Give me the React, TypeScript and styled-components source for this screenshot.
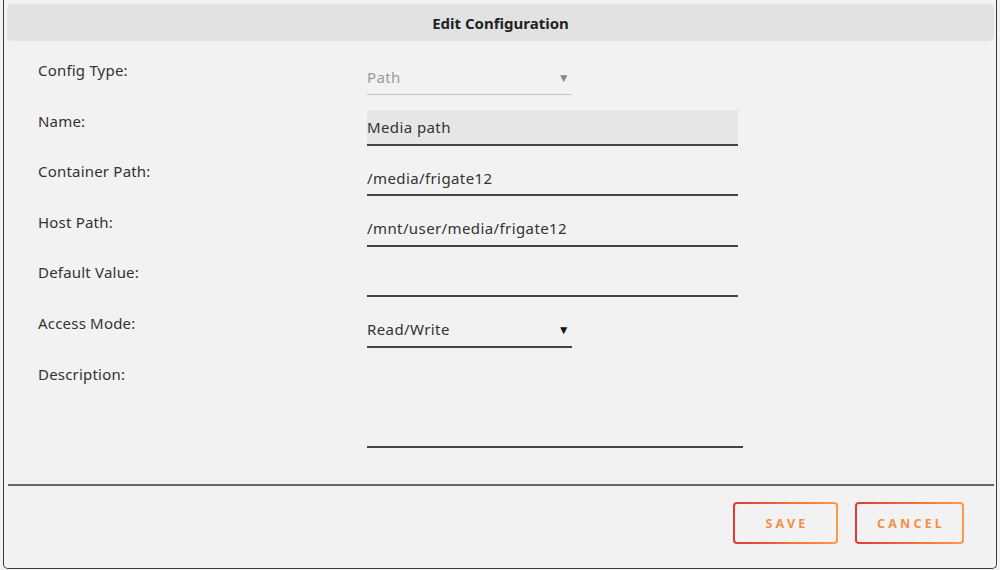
import React from "react";
import styled, { createGlobalStyle } from "styled-components";

const Global = createGlobalStyle`
  html, body { margin: 0; padding: 0; background: #f2f2f2; }
  body { font-family: "Noto Sans", "Open Sans", sans-serif; color: #333; }
`;

const Dialog = styled.div`
  box-sizing: border-box;
  margin: 0 3px;
  width: 994px;
  height: 569px;
  border: 1.5px solid #3a3a3a;
  border-top: none;
  border-radius: 0 0 5px 5px;
  background: #f2f2f2;
  display: flex;
  flex-direction: column;
  padding: 4px 2px 0 3px;
`;

const Header = styled.div`
  height: 37px;
  background: #e2e2e2;
  border-radius: 5px;
  display: flex;
  align-items: center;
  justify-content: center;
  font-weight: 700;
  font-size: 15px;
  color: #222;
`;

const Form = styled.div`
  display: flex;
  flex-direction: column;
  padding: 18px 0 0 31px;
  gap: 14.6px;
  flex: 1;
`;

const Row = styled.div`
  display: grid;
  grid-template-columns: 329px 1fr;
  align-items: start;
`;

const Label = styled.div`
  font-size: 15px;
  line-height: 22px;
  letter-spacing: 0.2px;
  color: #333;
`;

const TextInput = styled.div<{ $filled?: boolean; $width?: number }>`
  box-sizing: border-box;
  width: ${(p) => p.$width ?? 371}px;
  height: 36px;
  display: flex;
  align-items: center;
  font-size: 15px;
  letter-spacing: 0.4px;
  color: #333;
  background: ${(p) => (p.$filled ? "#e6e6e6" : "transparent")};
  border-bottom: 2px solid #444;
  padding-top: 1px;
`;

const Select = styled.div<{ $disabled?: boolean }>`
  box-sizing: border-box;
  width: 205px;
  height: 36px;
  display: flex;
  align-items: center;
  justify-content: space-between;
  font-size: 15px;
  letter-spacing: 0.4px;
  color: ${(p) => (p.$disabled ? "#9a9a9a" : "#333")};
  border-bottom: ${(p) => (p.$disabled ? "1px solid #c4c4c4" : "2px solid #444")};
  padding: 1px 2px 0 0;
`;

const Arrow = styled.span<{ $disabled?: boolean }>`
  font-size: 12px;
  color: ${(p) => (p.$disabled ? "#888" : "#111")};
`;

const TextArea = styled.div`
  box-sizing: border-box;
  width: 376px;
  height: 85px;
  border-bottom: 2px solid #444;
`;

const Divider = styled.div`
  height: 2px;
  background: #666;
  margin: 0 0 0 1px;
`;

const Footer = styled.div`
  display: flex;
  justify-content: flex-end;
  gap: 17px;
  padding: 16px 30px 0 0;
  height: 82px;
  box-sizing: border-box;
`;

const Button = styled.button<{ $w: number }>`
  box-sizing: border-box;
  width: ${(p) => p.$w}px;
  height: 42px;
  border: 2px solid transparent;
  border-radius: 4px;
  background: linear-gradient(#f2f2f2, #f2f2f2) padding-box,
    linear-gradient(90deg, #e0383a, #fd9a45) border-box;
  font-family: "Noto Sans", sans-serif;
  font-weight: 700;
  font-size: 12.5px;
  letter-spacing: 3.2px;
  color: #f0904a;
  padding: 0 0 0 3px;
  cursor: pointer;
`;

export default function App() {
  return (
    <>
      <Global />
      <Dialog>
        <Header>Edit Configuration</Header>
        <Form>
          <Row>
            <Label>Config Type:</Label>
            <Select $disabled>
              Path<Arrow $disabled>▼</Arrow>
            </Select>
          </Row>
          <Row>
            <Label>Name:</Label>
            <TextInput $filled>Media path</TextInput>
          </Row>
          <Row>
            <Label>Container Path:</Label>
            <TextInput>/media/frigate12</TextInput>
          </Row>
          <Row>
            <Label>Host Path:</Label>
            <TextInput>/mnt/user/media/frigate12</TextInput>
          </Row>
          <Row>
            <Label>Default Value:</Label>
            <TextInput />
          </Row>
          <Row>
            <Label>Access Mode:</Label>
            <Select>
              Read/Write<Arrow>▼</Arrow>
            </Select>
          </Row>
          <Row>
            <Label>Description:</Label>
            <TextArea />
          </Row>
        </Form>
        <Divider />
        <Footer>
          <Button $w={105}>SAVE</Button>
          <Button $w={109}>CANCEL</Button>
        </Footer>
      </Dialog>
    </>
  );
}
